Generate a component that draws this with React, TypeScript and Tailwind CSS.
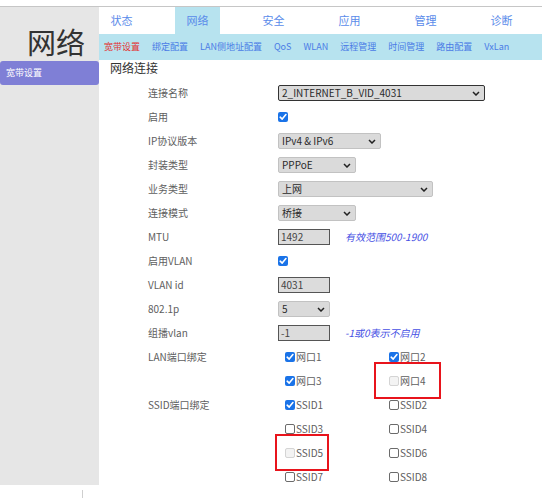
import React from "react";

type CBState = "on" | "off" | "dis";

function CB({ state }: { state: CBState }) {
  if (state === "on") {
    return (
      <span className="flex h-[10px] w-[10px] items-center justify-center rounded-[2px] bg-[#1a73e8]">
        <svg width="8" height="8" viewBox="0 0 8 8">
          <path d="M1.2 4.2 L3.2 6.1 L6.9 1.6" stroke="#fff" strokeWidth="1.6" fill="none" strokeLinecap="round" strokeLinejoin="round" />
        </svg>
      </span>
    );
  }
  if (state === "dis") {
    return <span className="block h-[10px] w-[10px] rounded-[2px] border border-[#d4d4d4] bg-[#f3f3f3]" />;
  }
  return <span className="block h-[10px] w-[10px] rounded-[2px] border border-[#6b6b6b] bg-white" />;
}

function Chevron() {
  return (
    <svg width="8" height="5" viewBox="0 0 8 5">
      <path d="M1 1 L4 4 L7 1" stroke="#222" strokeWidth="1.5" fill="none" />
    </svg>
  );
}

function Sel({ cls, text, dark }: { cls: string; text: string; dark?: boolean }) {
  return (
    <div
      className={
        "flex h-[16px] items-center justify-between rounded-[2px] border bg-[#dadada] pl-[3px] pr-[4px] text-[10px] text-[#2a2a2a] " +
        (dark ? "border-[#333]" : "border-[#c2c2c2]") +
        " " +
        cls
      }
    >
      <span className="leading-[14px]">{text}</span>
      <Chevron />
    </div>
  );
}

function Inp({ text }: { text: string }) {
  return (
    <div className="flex h-[16px] w-[52px] items-center border border-[#555] bg-[#dcdcdc] pl-[2px] text-[10px] text-[#444]">
      <span className="leading-[14px]">{text}</span>
    </div>
  );
}

function Row({ label, children }: { label?: string; children?: React.ReactNode }) {
  return (
    <div className="flex h-[24px] items-center">
      <div className="w-[179px] pl-[49px] text-[10px] text-[#5e5e5e] leading-[14px]">{label}</div>
      <div className="flex items-center">{children}</div>
    </div>
  );
}

function Item({ state, text, red }: { state: CBState; text: string; red?: "lan" | "ssid" }) {
  return (
    <div className="relative flex w-[104px] items-center">
      <div className="relative flex items-center">
        <CB state={state} />
        <span className="ml-px text-[10px] leading-[14px] text-[#5e5e5e]">{text}</span>
        {red === "lan" && (
          <span className="absolute left-[-15px] right-[-15px] top-[-12px] bottom-[-11px] border-2 border-[#e8141c]" />
        )}
        {red === "ssid" && (
          <span className="absolute left-[-10px] right-[-6px] top-[-12px] bottom-[-11px] border-2 border-[#e8141c]" />
        )}
      </div>
    </div>
  );
}

function Pair({ label, a, b }: { label?: string; a: React.ReactNode; b: React.ReactNode }) {
  return (
    <Row label={label}>
      <div className="flex pl-[7px]">
        {a}
        {b}
      </div>
    </Row>
  );
}

export default function App() {
  const tabs = ["状态", "网络", "安全", "应用", "管理", "诊断"];
  const sub = ["宽带设置", "绑定配置", "LAN侧地址配置", "QoS", "WLAN", "远程管理", "时间管理", "路由配置", "VxLan"];
  return (
    <div
      className="h-[498px] w-[542px] overflow-hidden bg-white"
      style={{ fontFamily: '"Noto Sans CJK SC", "Noto Sans", sans-serif' }}
    >
      <div className="pt-[6px]">
        <div className="h-px bg-[#c6c6c6]" />
      </div>
      <div className="flex h-[478px]">
        <div className="w-[99px] shrink-0 bg-[#e6e6e6]">
          <div className="h-[54px] pl-[27px] pt-[20px] text-[29px] leading-[29px] text-[#333]">网络</div>
          <div className="flex h-[24px] items-center rounded-[3px] bg-[#7f7fd6] pl-[6px] text-[9px] leading-[12px] text-white">
            宽带设置
          </div>
        </div>
        <div className="flex-1">
          <div className="flex h-[27px] gap-[31px]">
            {tabs.map((t, i) => (
              <div
                key={t}
                className={
                  "flex h-full w-[45px] items-center justify-center text-[11px] text-[#5a8bea] " +
                  (i === 1 ? "bg-[#b7e3ef]" : "")
                }
              >
                {t}
              </div>
            ))}
          </div>
          <div className="flex h-[26px] items-center gap-[12px] bg-[#b7e3ef] pl-[5px]">
            {sub.map((s, i) => (
              <span key={s} className={"text-[9px] leading-[12px] " + (i === 0 ? "text-[#e43030]" : "text-[#4a7be6]")}>
                {s}
              </span>
            ))}
          </div>
          <div className="mb-[6px] pl-[11px] pt-px text-[12px] leading-[14px] text-[#333]">网络连接</div>
          <Row label="连接名称">
            <Sel cls="w-[207px]" text="2_INTERNET_B_VID_4031" dark />
          </Row>
          <Row label="启用">
            <CB state="on" />
          </Row>
          <Row label="IP协议版本">
            <Sel cls="w-[103px]" text="IPv4 & IPv6" />
          </Row>
          <Row label="封装类型">
            <Sel cls="w-[78px]" text="PPPoE" />
          </Row>
          <Row label="业务类型">
            <Sel cls="w-[155px]" text="上网" />
          </Row>
          <Row label="连接模式">
            <Sel cls="w-[78px]" text="桥接" />
          </Row>
          <Row label="MTU">
            <Inp text="1492" />
            <span className="ml-[15px] text-[10px] italic leading-[14px] text-[#4650e4]">有效范围500-1900</span>
          </Row>
          <Row label="启用VLAN">
            <CB state="on" />
          </Row>
          <Row label="VLAN id">
            <Inp text="4031" />
          </Row>
          <Row label="802.1p">
            <Sel cls="w-[52px]" text="5" />
          </Row>
          <Row label="组播vlan">
            <Inp text="-1" />
            <span className="ml-[15px] text-[10px] italic leading-[14px] text-[#4650e4]">-1或0表示不启用</span>
          </Row>
          <Pair label="LAN端口绑定" a={<Item state="on" text="网口1" />} b={<Item state="on" text="网口2" />} />
          <Pair a={<Item state="on" text="网口3" />} b={<Item state="dis" text="网口4" red="lan" />} />
          <Pair label="SSID端口绑定" a={<Item state="on" text="SSID1" />} b={<Item state="off" text="SSID2" />} />
          <Pair a={<Item state="off" text="SSID3" />} b={<Item state="off" text="SSID4" />} />
          <Pair a={<Item state="dis" text="SSID5" red="ssid" />} b={<Item state="off" text="SSID6" />} />
          <Pair a={<Item state="off" text="SSID7" />} b={<Item state="off" text="SSID8" />} />
        </div>
      </div>
      <div className="ml-[82px] mt-[5px] h-[8px] w-px bg-[#cfcfcf]" />
    </div>
  );
}
